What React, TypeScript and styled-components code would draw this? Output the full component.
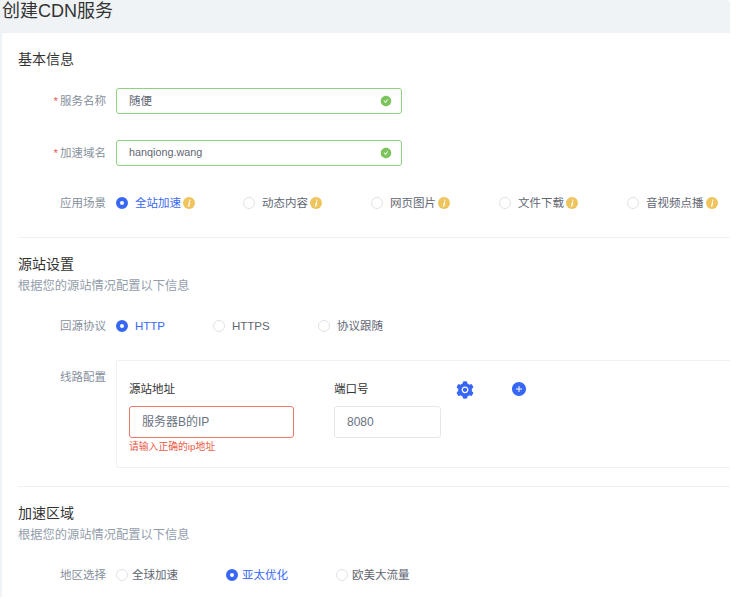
import React, { FC } from "react";
import styled, { createGlobalStyle } from "styled-components";
import { AiFillCheckCircle, AiFillPlusCircle, AiFillSetting } from "react-icons/ai";

const GlobalStyle = createGlobalStyle`
  html, body {
    margin: 0;
    height: 100%;
    overflow: hidden;
    background: #fff;
    font-family: "Liberation Sans", "Noto Sans CJK SC", sans-serif;
  }
`;

const Page = styled.div`
  width: 730px;
  height: 597px;
  margin-top: 2px;
  background: #f0f3f6;
  border-radius: 0 4px 0 0;
`;

const PageTitle = styled.h1`
  margin: -2px 0 0;
  height: 33px;
  padding-left: 2px;
  font-size: 18px;
  line-height: 22px;
  font-weight: 400;
  color: #333;
`;

const Card = styled.div`
  box-sizing: border-box;
  margin-left: 2px;
  height: 566px;
  padding: 16px 0 0 16px;
  background: #fff;
  border-radius: 2px 0 0 0;
  overflow: hidden;
`;

const SectionTitle = styled.h2`
  margin: 0;
  font-size: 14px;
  line-height: 20px;
  font-weight: 400;
  color: #333;
`;

const SectionHint = styled.p`
  margin: 2px 0 0;
  font-size: 12.25px;
  line-height: 20px;
  color: #929dab;
`;

const Divider = styled.div<{ $top: number }>`
  height: 1px;
  margin: ${({ $top }) => $top}px 0 16px;
  background: #f0f1f3;
`;

const Row = styled.div<{ $top: number; $align?: string }>`
  display: flex;
  align-items: ${({ $align }) => $align || "center"};
  margin-top: ${({ $top }) => $top}px;
  min-height: 26px;
`;

const Label = styled.label<{ $pad?: number }>`
  flex: none;
  width: 88px;
  margin-right: 10px;
  padding-top: ${({ $pad }) => $pad || 0}px;
  text-align: right;
  font-size: 11.5px;
  line-height: 16px;
  color: #868f9c;
`;

const Required = styled.span`
  margin-right: 2px;
  color: #e8605a;
`;

const ValidField = styled.div`
  box-sizing: border-box;
  display: flex;
  align-items: center;
  justify-content: space-between;
  width: 286px;
  height: 26px;
  padding: 0 9px 0 12px;
  border: 1px solid #8ed27f;
  border-radius: 3px;
  color: #5f6672;
  svg {
    color: #7cc35b;
  }
`;

const FieldValue = styled.span<{ $size: number }>`
  margin-bottom: 2px;
  font-size: ${({ $size }) => $size}px;
`;

const RadioGroup = styled.div`
  display: flex;
  align-items: center;
`;

const RadioItem = styled.div<{ $width: number; $gap: number; $active?: boolean }>`
  display: flex;
  align-items: center;
  width: ${({ $width }) => $width}px;
  gap: ${({ $gap }) => $gap}px;
  font-size: 11.5px;
  line-height: 16px;
  color: ${({ $active }) => ($active ? "#3767f6" : "#5f6672")};
`;

const RadioCircle = styled.span<{ $active?: boolean }>`
  box-sizing: border-box;
  flex: none;
  width: 12px;
  height: 12px;
  border-radius: 50%;
  border: ${({ $active }) => ($active ? "4px solid #3767f6" : "1px solid #dfe2e8")};
  background: #fff;
`;

const RadioText = styled.span`
  display: flex;
  align-items: center;
  gap: 2px;
`;

const LineBox = styled.div`
  box-sizing: border-box;
  display: flex;
  flex: 1;
  height: 108px;
  padding: 20px 0 0 12px;
  border: 1px solid #f0f1f3;
  border-right: 0;
  border-radius: 2px 0 0 2px;
`;

const FieldColumn = styled.div<{ $width: number; $margin: number }>`
  width: ${({ $width }) => $width}px;
  margin-right: ${({ $margin }) => $margin}px;
`;

const FieldLabel = styled.div`
  height: 17px;
  margin-bottom: 8px;
  font-size: 11.5px;
  line-height: 16px;
  color: #333;
`;

const BoxInput = styled.div<{ $error?: boolean }>`
  box-sizing: border-box;
  height: 32px;
  padding-left: 12px;
  border: 1px solid ${({ $error }) => ($error ? "#e8796b" : "#e4e7ec")};
  border-radius: 3px;
  font-size: 12px;
  line-height: 30px;
  color: #6a7280;
`;

const ErrorText = styled.div`
  margin-top: 2px;
  font-size: 9.8px;
  line-height: 13px;
  color: #ea5a47;
`;

const IconButton = styled.div<{ $width: number; $left?: number; $top?: number }>`
  display: flex;
  justify-content: center;
  width: ${({ $width }) => $width}px;
  height: 20px;
  margin-left: ${({ $left }) => $left || 0}px;
  margin-top: ${({ $top }) => $top || 0}px;
  color: #3767f6;
`;

const InfoIcon: FC = () => (
  <svg width="12" height="12" viewBox="0 0 12 12">
    <circle cx="6" cy="6" r="6" fill="#efc45c" />
    <path d="M6.6 5.2 5.7 9.2" stroke="#fff" strokeWidth="1.3" strokeLinecap="round" />
    <circle cx="6.9" cy="3.2" r="0.8" fill="#fff" />
  </svg>
);

type RadioProps = {
  text: string;
  width: number;
  gap?: number;
  active?: boolean;
  info?: boolean;
};

const Radio: FC<RadioProps> = ({ text, width, gap = 7, active, info }) => (
  <RadioItem $width={width} $gap={gap} $active={active}>
    <RadioCircle $active={active} />
    <RadioText>
      {text}
      {info && <InfoIcon />}
    </RadioText>
  </RadioItem>
);

const App: FC = () => {
  return (
    <React.Fragment>
      <GlobalStyle />
      <Page>
        <PageTitle>创建CDN服务</PageTitle>
        <Card>
          <SectionTitle>基本信息</SectionTitle>
          <Row $top={19}>
            <Label>
              <Required>*</Required>服务名称
            </Label>
            <ValidField>
              <FieldValue $size={11.5}>随便</FieldValue>
              <AiFillCheckCircle size={12} />
            </ValidField>
          </Row>
          <Row $top={26}>
            <Label>
              <Required>*</Required>加速域名
            </Label>
            <ValidField>
              <FieldValue $size={10.8}>hanqiong.wang</FieldValue>
              <AiFillCheckCircle size={12} />
            </ValidField>
          </Row>
          <Row $top={24}>
            <Label>应用场景</Label>
            <RadioGroup>
              <Radio text="全站加速" width={127} active info />
              <Radio text="动态内容" width={128} info />
              <Radio text="网页图片" width={128} info />
              <Radio text="文件下载" width={128} info />
              <Radio text="音视频点播" width={95} info />
            </RadioGroup>
          </Row>
          <Divider $top={21} />

          <SectionTitle>源站设置</SectionTitle>
          <SectionHint>根据您的源站情况配置以下信息</SectionHint>
          <Row $top={17}>
            <Label>回源协议</Label>
            <RadioGroup>
              <Radio text="HTTP" width={97} active />
              <Radio text="HTTPS" width={105} />
              <Radio text="协议跟随" width={100} />
            </RadioGroup>
          </Row>
          <Row $top={21} $align="flex-start">
            <Label $pad={9}>线路配置</Label>
            <LineBox>
              <FieldColumn $width={165} $margin={40}>
                <FieldLabel>源站地址</FieldLabel>
                <BoxInput $error>服务器B的IP</BoxInput>
                <ErrorText>请输入正确的ip地址</ErrorText>
              </FieldColumn>
              <FieldColumn $width={107} $margin={14}>
                <FieldLabel>端口号</FieldLabel>
                <BoxInput>8080</BoxInput>
              </FieldColumn>
              <IconButton $width={20} $top={-1}>
                <AiFillSetting size={20} />
              </IconButton>
              <IconButton $width={17} $left={35}>
                <AiFillPlusCircle size={16} />
              </IconButton>
            </LineBox>
          </Row>
          <Divider $top={18} />

          <SectionTitle>加速区域</SectionTitle>
          <SectionHint>根据您的源站情况配置以下信息</SectionHint>
          <Row $top={17}>
            <Label>地区选择</Label>
            <RadioGroup>
              <Radio text="全球加速" width={110} gap={4} />
              <Radio text="亚太优化" width={110} gap={4} active />
              <Radio text="欧美大流量" width={100} gap={4} />
            </RadioGroup>
          </Row>
        </Card>
      </Page>
    </React.Fragment>
  );
};

export default App;
